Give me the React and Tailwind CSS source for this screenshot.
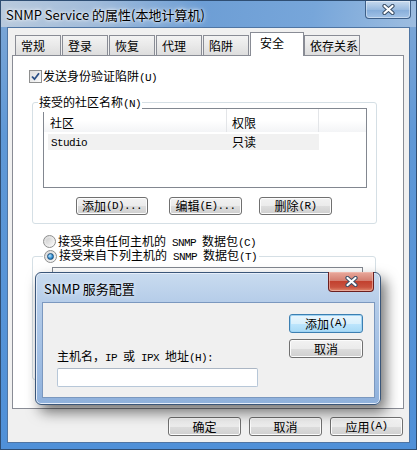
import { useState } from 'react'

const cjk = { fontFamily: '"Noto Sans CJK SC", "Liberation Sans", sans-serif' }
const mono = { fontFamily: '"Liberation Mono", "Noto Sans CJK SC", monospace' }

const tabs = ['常规', '登录', '恢复', '代理', '陷阱', '安全', '依存关系']

// half-width latin bits inside the SimSun-style labels
function M({ children }) {
  return (
    <span style={mono} className="text-[11px] tracking-[-0.6px]">
      {children}
    </span>
  )
}

function Btn({ children, focused, className = '' }) {
  return (
    <button
      className={`flex items-center justify-center rounded-[3px] border text-[12px] leading-none text-black ${
        focused
          ? 'border-[#3c7fb1] bg-[linear-gradient(#eaf6fd_0%,#d9f0fc_50%,#bee6fd_51%,#a7d9f5_100%)] shadow-[inset_0_0_0_1px_#9fd3f3]'
          : 'border-[#707070] bg-[linear-gradient(#f2f2f2_0%,#ebebeb_50%,#dddddd_51%,#cfcfcf_100%)] shadow-[inset_0_0_0_1px_#fcfcfc]'
      } ${className}`}
      style={cjk}
    >
      {children}
    </button>
  )
}

function CloseGlyph() {
  return (
    <svg width="13" height="11" viewBox="0 0 13 11">
      <path d="M2.5 2 L10.5 9 M10.5 2 L2.5 9" stroke="#3a4e66" strokeWidth="4.2" strokeLinecap="round" />
      <path d="M2.5 2 L10.5 9 M10.5 2 L2.5 9" stroke="#ffffff" strokeWidth="2.2" strokeLinecap="round" />
    </svg>
  )
}

function Radio({ checked }) {
  return (
    <span className="flex h-[13px] w-[13px] shrink-0 items-center justify-center rounded-full border border-[#8e8f8f] bg-[linear-gradient(135deg,#d9d9d9,#fafafa)]">
      {checked ? (
        <span className="h-[7px] w-[7px] rounded-full border border-[#1b4f7e] bg-[radial-gradient(circle_at_35%_35%,#bfe5fb,#2c8bd0_60%,#15568f)]" />
      ) : (
        <span className="h-[7px] w-[7px] rounded-full bg-[linear-gradient(135deg,#cfcfcf,#f4f4f4)]" />
      )}
    </span>
  )
}

export default function App() {
  const [active] = useState(5)

  return (
    <div
      className="relative h-[450px] w-[417px] overflow-hidden border border-[#2f4e73] bg-[linear-gradient(180deg,#7fa8d6_0%,#5f98d6_30%,#4f90d8_100%)]"
      style={cjk}
    >
      {/* title bar */}
      <div className="relative flex h-[26px] items-center bg-[linear-gradient(100deg,#b9cadd_0%,#a2bcda_22%,#6d9ed5_48%,#77a6da_75%,#9dbde0_100%)] pl-[5px]">
        <span className="text-[13px] leading-none text-black [text-shadow:0_0_6px_#ffffff,0_0_3px_#ffffff]">
          SNMP Service 的属性(本地计算机)
        </span>
        <div className="ml-auto mr-[5px] flex h-[18px] w-[46px] self-start items-center justify-center rounded-b-[4px] border border-t-0 border-[#3d5f88] bg-[linear-gradient(#d5e3f2cc,#9ebde0aa_50%,#7ea7d6aa_51%,#a7c6e9cc)] shadow-[inset_0_0_0_1px_#ffffff66]">
          <CloseGlyph />
        </div>
      </div>

      {/* window body */}
      <div className="mx-[6px] h-[416px] border border-[#4f75a3] bg-[#f0f0f0]">
        {/* tab strip */}
        <div className="mt-[5px] flex h-[22px] items-end pl-[7px]">
          {tabs.map((t, i) =>
            i === active ? (
              <div
                key={t}
                className="relative z-10 ml-[1px] mr-[-1px] mb-[-1px] flex h-[24px] w-[54px] items-start border border-b-0 border-[#898c95] bg-white pl-[9px] pt-[3px] text-[12px] leading-[14px]"
              >
                {t}
              </div>
            ) : (
              <div
                key={t}
                className={`flex h-[20px] items-center border border-b-0 border-[#898c95] bg-[linear-gradient(#f3f3f3,#e9e9e9_50%,#dddddd)] pl-[5px] text-[12px] leading-none ${
                  i === 6 ? 'w-[56px]' : 'w-[46px]'
                } ${i === 0 ? '' : 'ml-[1px]'}`}
              >
                {t}
              </div>
            )
          )}
        </div>

        {/* tab page */}
        <div className="ml-[4px] h-[354px] w-[392px] border border-[#898c95] bg-white">
          <div className="ml-[16px] mt-[14px] flex h-[13px] items-center">
            <span className="flex h-[13px] w-[13px] items-center justify-center border border-[#8e8f8f] bg-[linear-gradient(135deg,#dcdcdc,#fbfbfb)]">
              <svg width="9" height="9" viewBox="0 0 9 9">
                <path d="M1 4.5 L3.5 7.2 L8 1.2" fill="none" stroke="#2a4f86" strokeWidth="1.8" />
              </svg>
            </span>
            <span className="ml-[1px] text-[12px] leading-[12px]">
              发送身份验证陷阱<M>(U)</M>
            </span>
          </div>

          {/* community group */}
          <div className="relative ml-[19px] mt-[19px] h-[122px] w-[345px] rounded-[3px] border border-[#d5dfe5]">
            <span className="absolute left-[5px] top-[-9px] bg-white px-[1px] text-[12px] leading-[16px]">
              接受的社区名称<M>(N)</M>
            </span>
            <div className="ml-[10px] mt-[5px] h-[80px] w-[324px] border border-[#828790] bg-white">
              <div className="flex h-[23px] bg-[linear-gradient(#ffffff,#ffffff_50%,#f3f4f6)] text-[12px] leading-none">
                <div className="flex w-[183px] items-center border-r border-[#e3e5e8] pl-[6px] pt-[4px]">社区</div>
                <div className="flex w-[92px] items-center border-r border-[#e3e5e8] pl-[5px] pt-[4px]">权限</div>
              </div>
              <div className="ml-[4px] mt-[2px] flex h-[16px] w-[271px] items-center bg-[#f1f1f1] text-[12px] leading-none">
                <span className="w-[180px] pl-[3px]">
                  <M>Studio</M>
                </span>
                <span className="pl-[4px]">只读</span>
              </div>
            </div>
            <div className="mt-[9px] flex h-[18px]">
              <Btn className="ml-[43px] h-[18px] w-[72px]">
                添加<M>(D)...</M>
              </Btn>
              <Btn className="ml-[21px] h-[18px] w-[73px]">
                编辑<M>(E)...</M>
              </Btn>
              <Btn className="ml-[17px] h-[18px] w-[73px]">
                删除<M>(R)</M>
              </Btn>
            </div>
          </div>

          <div className="ml-[30px] mt-[11px] flex h-[13px] items-center text-[12px] leading-[12px]">
            <Radio />
            <span className="ml-[2px]">
              接受来自任何主机的<M> SNMP </M>数据包<M>(C)</M>
            </span>
          </div>

          {/* host group */}
          <div className="relative ml-[19px] mt-[8px] h-[124px] w-[344px] rounded-[3px] border border-[#d5dfe5]">
            <div className="absolute left-[10px] top-[-8px] flex h-[14px] items-center bg-white pl-[1px] pr-[2px] text-[12px] leading-[12px]">
              <Radio checked />
              <span className="ml-[2px]">
                接受来自下列主机的<M> SNMP </M>数据包<M>(T)</M>
              </span>
            </div>
            <div className="ml-[19px] mt-[10px] h-[100px] w-[311px] border border-[#828790] bg-white" />
          </div>
        </div>

        {/* footer buttons */}
        <div className="mt-[8px] flex justify-end gap-[8px] pr-[6px]">
          <Btn className="h-[19px] w-[73px]">确定</Btn>
          <Btn className="h-[19px] w-[73px]">取消</Btn>
          <Btn className="h-[19px] w-[73px]">
            应用<M>(A)</M>
          </Btn>
        </div>
      </div>

      {/* modal dialog */}
      <div className="absolute left-[34px] top-[271px] h-[133px] w-[346px] rounded-[6px] border border-[#3a5679] bg-[linear-gradient(#c9dbef_0%,#b3cbe8_25%,#a3c0e4_60%,#8fb1dc_100%)] pb-[6px] pl-[6px] pr-[5px] pt-[29px] shadow-[5px_7px_14px_rgba(0,0,0,0.55),inset_0_0_0_1px_#e6eefa]">
        <div className="absolute left-[8px] top-[9px] text-[13px] leading-[14px] text-black [text-shadow:0_0_5px_#ffffff]">
          SNMP 服务配置
        </div>
        <div className="absolute right-[6px] top-[-1px] flex h-[20px] w-[46px] items-center justify-center rounded-b-[4px] border border-t-0 border-[#6b1f1f] bg-[linear-gradient(#e9a99c_0%,#d47f71_45%,#c2412f_50%,#c9533f_80%,#e08a6f_100%)] shadow-[inset_0_0_0_1px_#f3c2b899]">
          <CloseGlyph />
        </div>
        <div className="flex h-full border border-[#7b98bf] bg-[#f0f0f0] pl-[14px] pt-[11px]">
          <div className="flex w-[201px] flex-col pt-[35px]">
            <div className="h-[14px] text-[12px] leading-[14px]">
              主机名，<M>IP </M>或<M> IPX </M>地址<M>(H):</M>
            </div>
            <div className="mt-[5px] h-[19px] w-[201px] rounded-[2px] border border-[#b7c7d8] border-t-[#abb6c4] bg-white" />
          </div>
          <div className="ml-[31px] flex flex-col gap-[6px]">
            <Btn focused className="h-[19px] w-[74px]">
              添加<M>(A)</M>
            </Btn>
            <Btn className="h-[19px] w-[74px]">取消</Btn>
          </div>
        </div>
      </div>
    </div>
  )
}
